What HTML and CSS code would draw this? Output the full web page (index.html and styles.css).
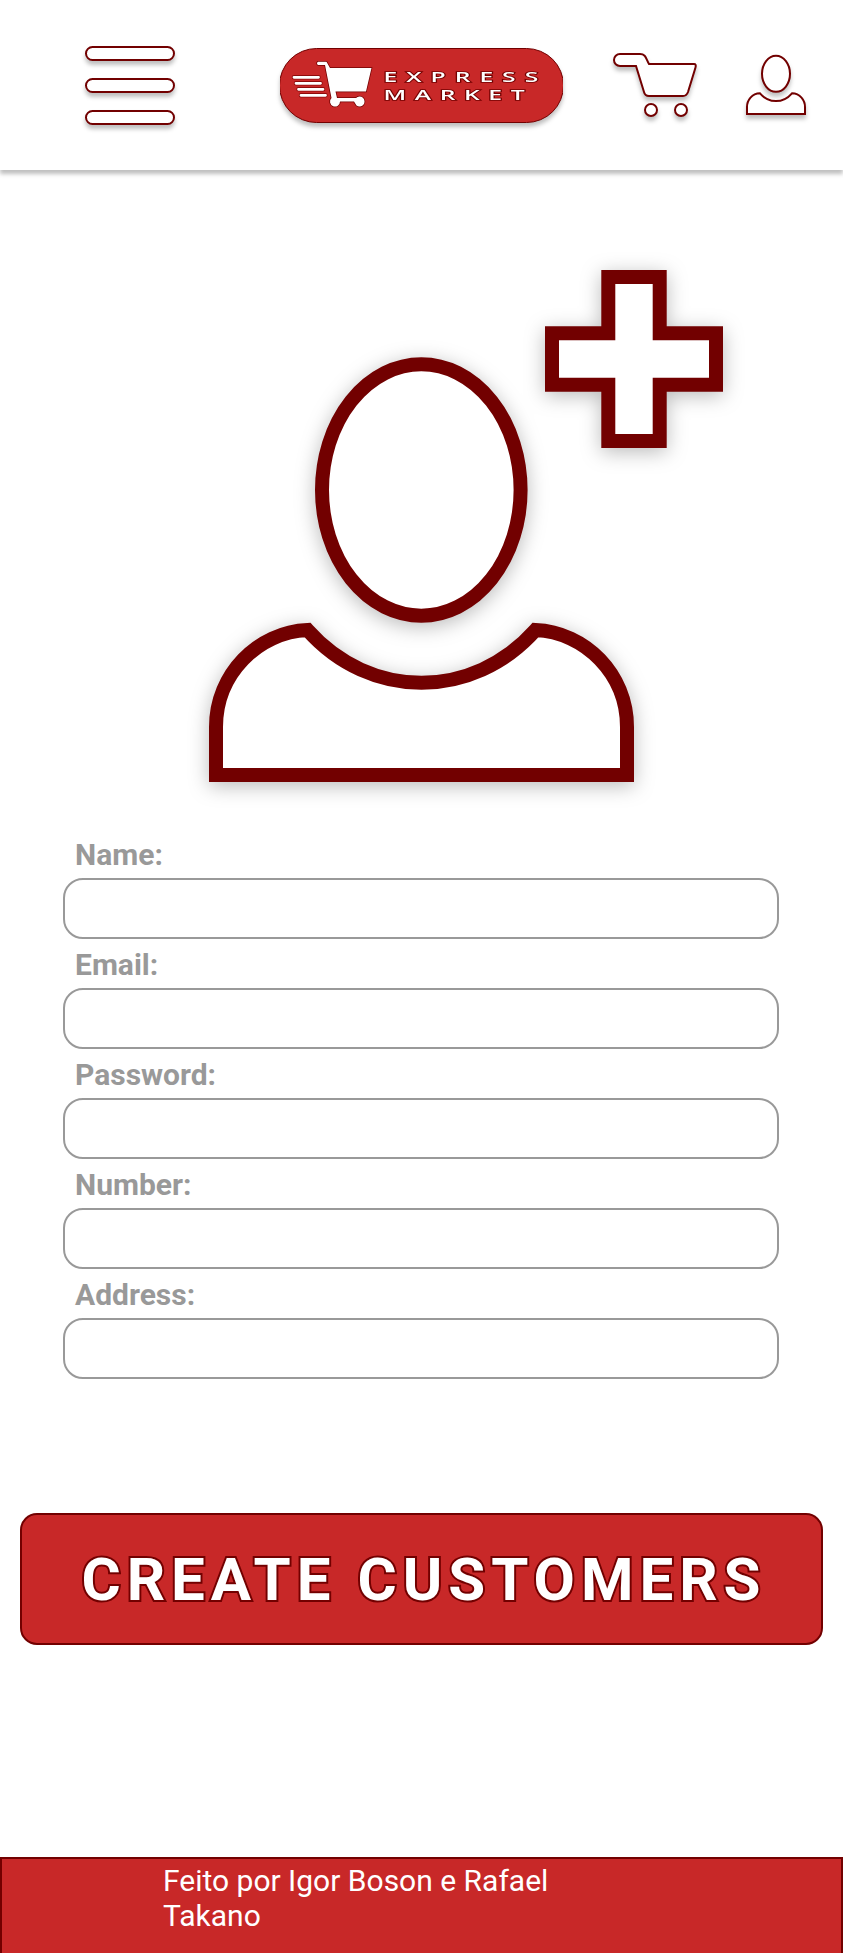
FILE: index.html
```html
<!DOCTYPE html>
<html lang="en">
<head>
<meta charset="utf-8">
<title>Express Market</title>
<link rel="stylesheet" href="styles.css">
</head>
<body>
<header class="topbar">
  <button class="menu" aria-label="Menu"><span class="bar"></span><span class="bar"></span><span class="bar"></span></button>
  <svg class="logo" viewBox="0 0 283 75" width="283" height="75">
    <svg width="283" height="75"><rect class="logo-pill" x="-0.5" y="0.5" width="284" height="74" rx="37"/></svg>
    <g class="logo-lines">
      <path d="M14 29.3H38.5M16 35.3H40.5M18.5 41.3H43M21 47.3H45.5" class="edge"/>
      <path d="M14 29.3H38.5M16 35.3H40.5M18.5 41.3H43M21 47.3H45.5" class="core"/>
    </g>
    <path class="logo-cart" d="M38 13.7H46.5L50 20H91.5L86 43.5H55.5L57 50H76A5 5 0 1 1 76.5 57.5L74 53.5H60A5 5 0 1 1 51.5 50L45 17H38Q36 15.300 38 13.700Z"/>
    <g transform="translate(103.500 0) scale(1.7 1)">
      <text class="logo-text" x="0" y="34" textLength="91" lengthAdjust="spacing">EXPRESS</text>
      <text class="logo-text" x="0" y="52" textLength="83" lengthAdjust="spacing">MARKET</text>
    </g>
  </svg>
  <svg class="cart" viewBox="0 0 86 66" width="86" height="66">
    <path d="M7 2H27C33 2 33 7 36 12H81Q83.500 12 82.500 15.500L75 40Q73.500 44 70 44H36Q32 44 31 40L23 14H7A6 6 0 0 1 7 2Z"/>
    <circle cx="38" cy="58" r="6"/><circle cx="68" cy="58" r="6"/>
  </svg>
  <svg class="person" viewBox="0 0 60 60" width="60" height="60">
    <ellipse cx="30" cy="18.800" rx="14" ry="18"/>
    <path d="M1 59H59V52C59 45 54 38.500 46 38.300C37 48.700 23 48.700 14 38.300C6 38.500 1 45 1 52Z"/>
  </svg>
</header>
<main class="content">
  <svg class="hero" viewBox="0 0 560 560" width="560" height="560">
    <path d="M408.300 27H459.700V83.300H516V134.700H459.700V191H408.300V134.700H352V83.300H408.300Z"/>
    <ellipse cx="221.300" cy="240" rx="99.300" ry="125.700"/>
    <path d="M16 525H427V477C427 424 385 382 335.500 380C273 450.300 170 450.300 107.500 380C58 382 16 424 16 477Z"/>
  </svg>
  <form class="form">
    <label class="label" for="name">Name:</label><input class="field" id="name">
    <label class="label" for="email">Email:</label><input class="field" id="email">
    <label class="label" for="password">Password:</label><input class="field" id="password" type="password">
    <label class="label" for="number">Number:</label><input class="field" id="number">
    <label class="label" for="address">Address:</label><input class="field" id="address">
    <button class="submit" type="button">CREATE CUSTOMERS</button>
  </form>
</main>
<footer class="footer"><p class="credit">Feito por Igor Boson e Rafael Takano</p></footer>
</body>
</html>
```
FILE: styles.css
```css
* { box-sizing: border-box; }
body { margin: 0; width: 843px; height: 1953px; overflow: hidden; display: flex; flex-direction: column; background: #fff; font-family: Roboto, sans-serif; }
.topbar { display: flex; align-items: flex-start; height: 170px; flex: none; background: #fff; box-shadow: 0 4px 4px rgba(0,0,0,.25); }
.topbar > svg { flex: none; overflow: visible; filter: drop-shadow(0 4px 2px rgba(0,0,0,.25)); }
.menu { display: flex; flex-direction: column; gap: 17px; width: 90px; margin: 46px 0 0 85px; padding: 0; border: 0; background: none; }
.bar { height: 15px; border: 2px solid #720000; border-radius: 8px; background: #fff; box-shadow: 0 4px 4px rgba(0,0,0,.25); }
.logo { margin: 48px 0 0 105px; }
.logo-pill { fill: #c82828; stroke: #720000; stroke-width: 1; }
.logo-lines { fill: none; stroke-linecap: round; }
.edge { stroke: #8e0b0b; stroke-width: 4.4px; }
.core { stroke: #fff; stroke-width: 2.8px; }
.logo-cart { fill: #fff; stroke: #720000; stroke-width: 1.5px; paint-order: stroke; }
.logo-text { font: 600 14.500px "Open Sans", sans-serif; fill: #fff; stroke: #720000; stroke-width: 1.6px; paint-order: stroke; }
.cart, .person, .hero { fill: #fff; stroke: #720000; stroke-width: 2px; }
.cart { margin: 52px 0 0 50px; }
.person { margin: 55px 0 0 47px; }
.content { flex: none; display: flex; flex-direction: column; }
.hero { margin: 80px 0 0 200px; stroke-width: 14px; overflow: visible; filter: drop-shadow(0 4px 10px rgba(0,0,0,.27)); }
.form { display: flex; flex-direction: column; padding: 27px 20px 0; }
.label { height: 41px; padding-left: 55px; font-size: 30px; font-weight: 700; line-height: 35px; color: #999; }
.field { height: 61px; margin: 0 44px 8px 43px; padding: 0 20px; border: 2px solid #999; border-radius: 20px; background: #fff; font: 30px Roboto, sans-serif; }
.submit { height: 132px; margin-top: 126px; padding: 0 0 0 5px; border: 2px solid #720000; border-radius: 17px; background: #c82828; color: #fff; font: 700 60px Roboto, sans-serif; letter-spacing: 6px; white-space: nowrap; -webkit-text-stroke: 4px #720000; paint-order: stroke fill; }
.footer { margin-top: auto; height: 96px; flex: none; border: 2px solid #720000; border-bottom: 0; background: #c82828; }
.credit { width: 420px; margin: 4px 0 0 161px; color: #fff; font-size: 30px; line-height: 35px; }
```
